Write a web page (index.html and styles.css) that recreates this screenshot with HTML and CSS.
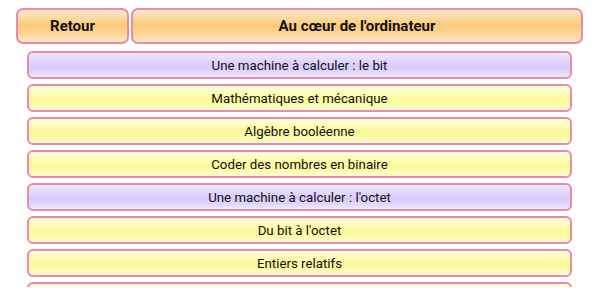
FILE: index.html
```html
<!DOCTYPE html>
<html lang="fr">
<head>
<meta charset="utf-8">
<link rel="stylesheet" href="styles.css">
</head>
<body>
<div class="page">
  <div class="header">
    <div class="btn back">Retour</div>
    <div class="btn title">Au cœur de l'ordinateur</div>
  </div>
  <div class="list">
    <div class="item violet">Une machine à calculer : le bit</div>
    <div class="item">Mathématiques et mécanique</div>
    <div class="item">Algèbre booléenne</div>
    <div class="item">Coder des nombres en binaire</div>
    <div class="item violet">Une machine à calculer : l'octet</div>
    <div class="item">Du bit à l'octet</div>
    <div class="item">Entiers relatifs</div>
    <div class="item"></div>
  </div>
</div>
</body>
</html>
```

FILE: styles.css
```css
html, body {
  margin: 0;
  padding: 0;
  background: #ffffff;
  overflow: hidden;
}
.page {
  font-family: Roboto, "Noto Sans", sans-serif;
  color: #111;
  height: 287px;
  overflow: hidden;
}
.header {
  display: flex;
  gap: 2px;
  padding: 8px 17px 0 16px;
}
.btn {
  height: 36px;
  box-sizing: border-box;
  border: 2px solid #e88aa8;
  border-radius: 7px;
  display: flex;
  align-items: center;
  justify-content: center;
  font-weight: 700;
  font-size: 15px;
  background: linear-gradient(to bottom, #fee9cc 0%, #fdd9a0 25%, #fcc97a 50%, #fdd69a 75%, #fee6c4 100%);
}
.back {
  width: 113px;
  flex: none;
}
.title {
  flex: 1;
}
.list {
  display: flex;
  flex-direction: column;
  gap: 5px;
  padding: 7px 28px 0 27px;
}
.item {
  height: 28px;
  flex: none;
  box-sizing: border-box;
  border: 2px solid #e88aa8;
  border-radius: 6px;
  display: flex;
  align-items: center;
  justify-content: center;
  font-size: 13.3px;
  background: linear-gradient(to bottom, #fefee2 0%, #fdfcb6 30%, #fcf99a 55%, #fdfbb0 80%, #fefed8 100%);
}
.item.violet {
  background: linear-gradient(to bottom, #f0eafe 0%, #e2d8fd 30%, #d8cbfc 55%, #e0d6fd 80%, #efe9fe 100%);
}
```
